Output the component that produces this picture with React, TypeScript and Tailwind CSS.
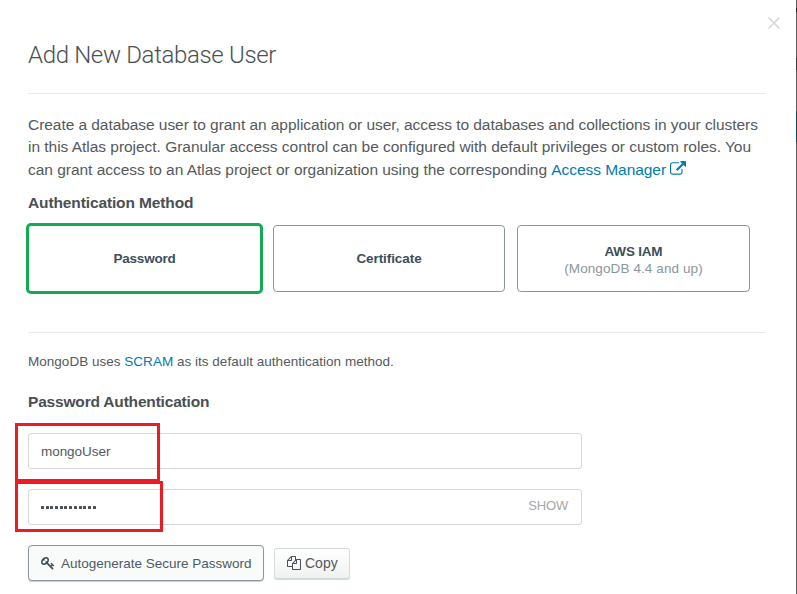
import React from 'react';

const EXTERNAL =
  'M1408 928v320q0 119-84.500 203.500T1120 1536H288q-119 0-203.500-84.500T0 1248V416q0-119 84.500-203.500T288 128h704q14 0 23 9t9 23v64q0 14-9 23t-23 9H288q-66 0-113 47t-47 113v832q0 66 47 113t113 47h832q66 0 113-47t47-113V928q0-14 9-23t23-9h64q14 0 23 9t9 23zm384-864v512q0 26-19 45t-45 19-45-19l-176-176-652 652q-10 10-23 10t-23-10L695 983q-10-10-10-23t10-23l652-652-176-176q-19-19-19-45t19-45 45-19h512q26 0 45 19t19 45z';
const KEY =
  'M832 512q0-80-56-136t-136-56-136 56-56 136q0 42 19 83-41-19-83-19-80 0-136 56t-56 136 56 136 136 56 136-56 56-136q0-42-19-83 41 19 83 19 80 0 136-56t56-136zm851 704q0 17-49 66t-66 49q-9 0-28.5-16t-36.5-33-38.5-40-24.5-26l-96 96 220 220q28 28 28 68 0 42-39 81t-81 39q-40 0-68-28l-671-671q-176 131-365 131-163 0-265.500-102.500T0 784q0-160 95-313t248-248 313-95q163 0 265.500 102.500T1024 496q0 189-131 365l355 355 96-96q-3-3-26-24.500t-40-38.500-33-36.500-16-28.500q0-17 49-66t66-49q13 0 23 10 6 6 46 44.500t82 79.500 86.500 86 73 78 28.500 41z';
const FILES =
  'M1696 384q40 0 68 28t28 68v1216q0 40-28 68t-68 28H736q-40 0-68-28t-28-68v-288H96q-40 0-68-28T0 1312V640q0-40 20-88t48-76L476 68q28-28 76-48t88-20h416q40 0 68 28t28 68v328q68-40 128-40h416zm-544 213L853 896h299V597zM512 213L213 512h299V213zm196 647l316-316V128H640v416q0 40-28 68t-68 28H128v640h512v-256q0-40 20-88t48-76zm956 804V512h-384v416q0 40-28 68t-68 28H768v640h896z';

function Icon({ d, className }: { d: string; className: string }) {
  return (
    <svg viewBox="0 0 1792 1792" fill="currentColor" className={className} aria-hidden="true">
      <path d={d} />
    </svg>
  );
}

export default function App() {
  return (
    <div className="flex h-[594px] w-[797px] overflow-hidden bg-white font-['Liberation_Sans',Arial,sans-serif] text-[#494f53]">
      <main className="relative w-[796px] shrink-0 pl-7 pr-[30px]">
        <button aria-label="Close" className="absolute left-[768px] top-[17px] text-[#d4d6d6]">
          <svg viewBox="0 0 12 12" className="block size-3" stroke="currentColor" strokeWidth="1.5">
            <path d="M.5.5l11 11M11.500.5l-11 11" />
          </svg>
        </button>

        <header className="h-[94px] border-b border-[#e8e9ea] pt-[37px]">
          <h1 className="whitespace-nowrap font-['Roboto',sans-serif] text-[24px] font-light leading-9 tracking-[-0.34px]">
            Add New Database User
          </h1>
        </header>

        <p className="mt-5 whitespace-nowrap text-[15.5px] leading-[22.5px] text-[#54595d]">
          <span className="block tracking-[-0.055px]">
            Create a database user to grant an application or user, access to databases and collections in your clusters
          </span>
          <span className="-mt-px mb-px block tracking-[-0.03px]">
            in this Atlas project. Granular access control can be configured with default privileges or custom roles. You
          </span>
          <span className="flex items-center">
            <span className="whitespace-pre tracking-[-0.03px]">can grant access to an Atlas project or organization using the corresponding </span>
            <a className="flex items-center gap-1 tracking-[-0.05px] text-[#007cad]">
              Access Manager
              <Icon d={EXTERNAL} className="mb-0.5 size-4" />
            </a>
          </span>
        </p>

        <h2 className="mt-[11px] text-[15.5px] font-bold leading-5 tracking-[-0.12px]">Authentication Method</h2>
        <div className="-ml-0.5 mt-[10px] flex h-[71px] items-center text-[13.5px] leading-[17px] text-[#3d4f58]">
          <button className="h-[71px] w-[237px] rounded-[5px] border-3 border-[#13aa52] font-bold">
            <span className="tracking-[-0.2px]">Password</span>
          </button>
          <button className="ml-2.5 h-[67px] w-[232px] rounded border border-[#89979b] font-bold">
            <span className="tracking-[-0.08px]">Certificate</span>
          </button>
          <button className="ml-3 h-[67px] w-[233px] rounded border border-[#89979b] pt-[3px]">
            <span className="block font-bold tracking-[-0.2px]">AWS IAM</span>
            <span className="block tracking-[0.1px] text-[#89979b]">(MongoDB 4.4 and up)</span>
          </button>
        </div>

        <p className="mt-[38px] border-t border-[#e8e9ea] pt-[19px] text-[13.5px] leading-5 text-[#54595d]">
          <span className="tracking-[0.02px]">
            MongoDB uses <a className="text-[#007cad]">SCRAM</a> as its default authentication method.
          </span>
        </p>
        <h2 className="mt-5 text-[15.5px] font-bold leading-5">
          <span className="tracking-[-0.18px]">Password Authentication</span>
        </h2>

        <div className="relative mt-[21px] flex w-[554px] flex-col gap-5 text-[13.5px]">
          <div className="flex h-9 items-center rounded-[3px] border border-[#d5dadb] px-3">
            <span className="pt-[3px] tracking-[-0.05px] text-[#54595d]">mongoUser</span>
          </div>
          <div className="flex h-9 items-center justify-between rounded-[3px] border border-[#d5dadb] px-3">
            <span className="flex gap-[1.7px] pt-px" aria-label="Password">
              {Array.from({ length: 12 }, (_, i) => (
                <i key={i} className="block size-[3px] rounded-[0.5px] bg-[#494f53]" />
              ))}
            </span>
            <span className="mr-px pb-0.5 text-[13px] tracking-[-0.2px] text-[#a4a8a9]">SHOW</span>
          </div>
          <div className="absolute -left-[13px] -top-[10px] h-[59px] w-[145px] border-3 border-[#ed1c24]" />
          <div className="absolute -left-[13px] top-12 h-[51px] w-[148px] border-3 border-[#ed1c24]" />
        </div>

        <div className="mt-5 flex items-center gap-2.5 whitespace-nowrap text-[14px]">
          <button className="flex h-9 w-[236px] items-center gap-1.5 rounded border border-[#89979b] bg-[#f9fbfa] pl-3 text-[#4b5b63] shadow-[0_1px_1px_rgba(0,0,0,0.2)]">
            <Icon d={KEY} className="size-3.5 text-[#3d4f58]" />
            <span className="pt-[3px] text-[13.5px]">Autogenerate Secure Password</span>
          </button>
          <button className="mt-0.5 flex h-8 w-[76px] items-center gap-1 rounded-[3px] border border-b-2 border-[#d5dadb] bg-linear-to-b from-white to-[#f0f1f1] pl-3">
            <Icon d={FILES} className="size-3.5" />
            <span className="pt-px text-[#54595d]">Copy</span>
          </button>
        </div>
      </main>
      <div className="flex w-px shrink-0 flex-col bg-[#5b5c5e]">
        <i className="mt-2 h-1 bg-[#222]" />
        <i className="mt-[46px] h-3 bg-[#363738]" />
        <i className="mt-[41px] h-[31px] bg-[#08475b]" />
      </div>
    </div>
  );
}
